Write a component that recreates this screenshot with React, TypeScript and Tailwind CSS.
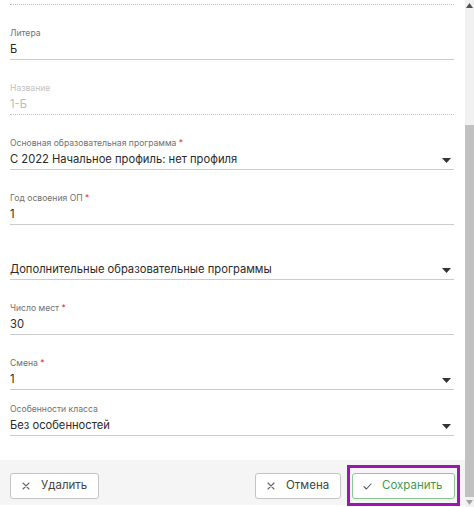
type FieldProps = {
  label?: string;
  value: string;
  required?: boolean;
  select?: boolean;
  disabled?: boolean;
  className?: string;
};

function Field({ label, value, required, select, disabled, className = "" }: FieldProps) {
  return (
    <div className={className}>
      <div className={`h-[14px] text-[8.6px] leading-[14px] ${disabled ? "text-[#c2c2c2]" : "text-[#707070]"}`}>
        {label}
        {required && <span className="text-[#e53935]"> *</span>}
      </div>
      <div
        className={`flex items-center h-[20px] border-b ${
          disabled ? "border-dotted border-[#c2c2c2]" : "border-[#cccccc]"
        }`}
      >
        <span className={`flex-1 text-[11.2px] leading-[19px] ${disabled ? "text-[#bdbdbd]" : "text-[#2a2a2a]"}`}>
          {value}
        </span>
        {select && (
          <svg width="9" height="5" viewBox="0 0 9 5" className="mr-[3px] mt-[1px]">
            <path d="M0 0h9L4.5 5z" fill="#333" />
          </svg>
        )}
      </div>
    </div>
  );
}

function Cross() {
  return (
    <svg width="8" height="8" viewBox="0 0 8 8">
      <path d="M1 1l6 6M7 1l-6 6" stroke="#666" strokeWidth="1.1" strokeLinecap="round" />
    </svg>
  );
}

export default function App() {
  return (
    <div className="flex h-[507px] w-[474px] bg-white overflow-hidden" style={{ fontFamily: "Inter, 'Noto Sans', sans-serif" }}>
      <div className="flex flex-col w-[465px]">
        <div className="px-[10px] pr-[11px]">
          <div className="h-[5px] border-b border-dotted border-[#c2c2c2]" />
          <Field className="mt-[21px]" label="Литера" value="Б" />
          <Field className="mt-[21px]" label="Название" value="1-Б" disabled />
          <Field className="mt-[21px]" label="Основная образовательная программа" required value="С 2022 Начальное профиль: нет профиля" select />
          <Field className="mt-[21px]" label="Год освоения ОП" required value="1" />
          <Field className="mt-[21px]" value="Дополнительные образовательные программы" select />
          <Field className="mt-[21px]" label="Число мест" required value="30" />
          <Field className="mt-[21px]" label="Смена" required value="1" select />
          <Field className="mt-[12px]" label="Особенности класса" value="Без особенностей" select />
        </div>
        <div className="mt-[24px] h-[45px] bg-[#f5f5f5] flex items-start pt-[5px] pl-[10px] pr-[5px]">
          <button className="mt-[8px] flex items-center h-[26px] w-[89px] bg-white border border-[#c4c4c4] rounded-[3px] pl-[11px] text-[11.5px] text-[#444]">
            <Cross />
            <span className="ml-[11px]">Удалить</span>
          </button>
          <div className="flex-1" />
          <button className="mt-[8px] flex items-center h-[26px] w-[86px] bg-white border border-[#c4c4c4] rounded-[3px] pl-[11px] text-[11.5px] text-[#444]">
            <Cross />
            <span className="ml-[11px]">Отмена</span>
          </button>
          <div className="ml-[6px] border-[3px] border-[#9b16b3] pl-[2px] pr-[2px] pt-[5px] pb-[4px]">
            <button className="flex items-center h-[26px] w-[103px] bg-white border border-[#8cc895] rounded-[3px] pl-[10px] text-[11.5px] text-[#3f9a4f]">
              <svg width="9" height="7" viewBox="0 0 9 7">
                <path d="M1 3.6l2.4 2.4L8 1" stroke="#555" strokeWidth="1.1" fill="none" strokeLinecap="round" strokeLinejoin="round" />
              </svg>
              <span className="ml-[10px]">Сохранить</span>
            </button>
          </div>
        </div>
      </div>
      <div className="w-[9px] h-full bg-[#f1f1f1] flex flex-col items-center">
        <svg width="7" height="5" viewBox="0 0 7 5" className="mt-[3px]">
          <path d="M0 5h7L3.5 0z" fill="#505050" />
        </svg>
        <div className="mt-[117px] w-[9px] h-[372px] bg-[#c1c1c1]" />
        <div className="flex-1" />
        <svg width="7" height="5" viewBox="0 0 7 5" className="mb-[2px]">
          <path d="M0 0h7L3.5 5z" fill="#a3a3a3" />
        </svg>
      </div>
    </div>
  );
}
